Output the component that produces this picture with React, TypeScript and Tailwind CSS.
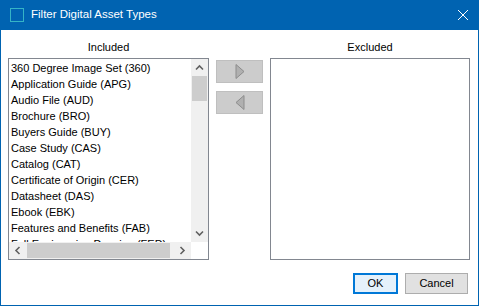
import React from 'react';

const ITEMS = [
  '360 Degree Image Set (360)',
  'Application Guide (APG)',
  'Audio File (AUD)',
  'Brochure (BRO)',
  'Buyers Guide (BUY)',
  'Case Study (CAS)',
  'Catalog (CAT)',
  'Certificate of Origin (CER)',
  'Datasheet (DAS)',
  'Ebook (EBK)',
  'Features and Benefits (FAB)',
  'Full Engineering Drawing (FED)',
];

const font = { fontFamily: '"Liberation Sans", Arial, sans-serif' };

const Chevron: React.FC<{ dir: 'up' | 'down' | 'left' | 'right' }> = ({ dir }) => {
  const rot = { up: 0, right: 90, down: 180, left: 270 }[dir];
  return (
    <svg width="9" height="9" viewBox="0 0 9 9" style={{ transform: `rotate(${rot}deg)` }}>
      <path d="M1 6.5 L4.5 3 L8 6.5" fill="none" stroke="#606060" strokeWidth="1.6" />
    </svg>
  );
};

const ArrowButton: React.FC<{ dir: 'left' | 'right' }> = ({ dir }) => (
  <button className="w-[47px] h-[23px] bg-[#cccccc] border border-[#bfbfbf] flex items-center justify-center">
    <svg width="10" height="15" viewBox="0 0 10 15">
      {dir === 'right' ? (
        <path d="M1 0.5 L9 7.5 L1 14.5 Z" fill="#b0b0b0" stroke="#8c8c8c" strokeWidth="1" />
      ) : (
        <path d="M9 0.5 L1 7.5 L9 14.5 Z" fill="#b0b0b0" stroke="#8c8c8c" strokeWidth="1" />
      )}
    </svg>
  </button>
);

export default function App() {
  return (
    <div
      className="w-[479px] h-[306px] bg-white border-x border-b border-[#0063b1] flex flex-col text-[11px] text-black overflow-hidden"
      style={font}
    >
      {/* Title bar */}
      <div className="h-[30px] bg-[#0063b1] flex items-center shrink-0 -mx-px">
        <div className="ml-[10px] w-[14px] h-[14px] border-[1.5px] border-[#35b4c6]" />
        <span className="ml-[7px] text-white text-[11.5px] leading-none">Filter Digital Asset Types</span>
        <div className="ml-auto mr-[10px] w-[12px] h-[12px] flex items-center justify-center">
          <svg width="12" height="12" viewBox="0 0 12 12">
            <path d="M1 1 L11 11 M11 1 L1 11" stroke="white" strokeWidth="1" />
          </svg>
        </div>
      </div>

      {/* Body */}
      <div className="flex pl-[7px] pt-[7px] gap-[7px]">
        {/* Included */}
        <div className="w-[201px] flex flex-col">
          <div className="h-[21px] flex items-center justify-center">Included</div>
          <div className="h-[202px] border border-[#828790] relative flex flex-col">
            <div className="flex flex-1 min-h-0">
              <div className="flex-1 overflow-hidden pt-[1px]">
                {ITEMS.map((item) => (
                  <div key={item} className="h-[16px] leading-[16px] pl-[2px] whitespace-nowrap">
                    {item}
                  </div>
                ))}
              </div>
              {/* vertical scrollbar */}
              <div className="w-[17px] bg-[#f0f0f0] flex flex-col">
                <div className="h-[17px] flex items-center justify-center">
                  <Chevron dir="up" />
                </div>
                <div className="mx-[1px] h-[25px] bg-[#cdcdcd]" />
                <div className="flex-1" />
                <div className="h-[17px] flex items-center justify-center">
                  <Chevron dir="down" />
                </div>
              </div>
            </div>
            {/* horizontal scrollbar */}
            <div className="h-[17px] flex">
              <div className="flex-1 bg-[#f0f0f0] flex items-center">
                <div className="w-[17px] flex items-center justify-center">
                  <Chevron dir="left" />
                </div>
                <div className="ml-[1px] w-[143px] h-[15px] bg-[#cdcdcd]" />
                <div className="flex-1" />
                <div className="w-[17px] flex items-center justify-center">
                  <Chevron dir="right" />
                </div>
              </div>
              <div className="w-[17px] bg-white" />
            </div>
          </div>
        </div>

        {/* Move buttons */}
        <div className="w-[47px] flex flex-col gap-[8px] pt-[23px]">
          <ArrowButton dir="right" />
          <ArrowButton dir="left" />
        </div>

        {/* Excluded */}
        <div className="w-[200px] flex flex-col">
          <div className="h-[21px] flex items-center justify-center">Excluded</div>
          <div className="h-[202px] border border-[#828790]" />
        </div>
      </div>

      {/* Footer buttons */}
      <div className="flex justify-end gap-[7px] pr-[10px] pt-[13px]">
        <button className="w-[45px] h-[21px] border-2 border-[#0078d7] bg-[#e5f1fb] leading-none">OK</button>
        <button className="w-[63px] h-[21px] border border-[#adadad] bg-[#e1e1e1] leading-none">Cancel</button>
      </div>
    </div>
  );
}
